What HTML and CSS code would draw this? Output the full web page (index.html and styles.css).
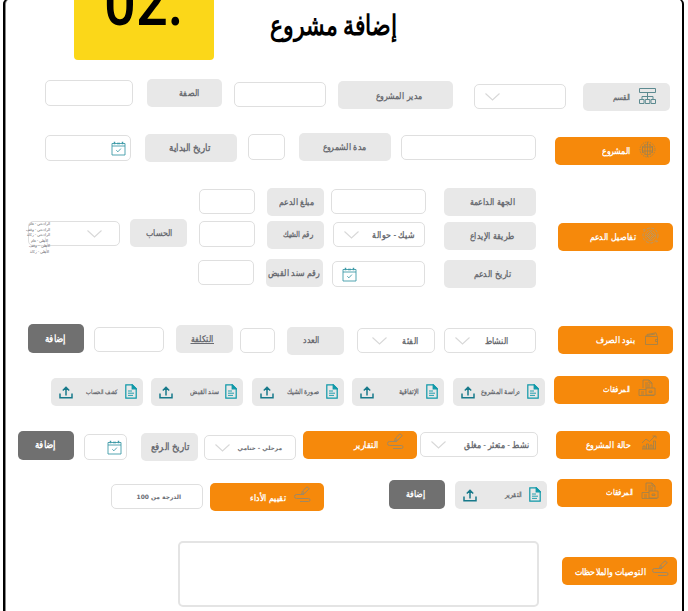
FILE: index.html
```html
<!DOCTYPE html>
<html lang="ar">
<head>
<meta charset="utf-8">
<title>إضافة مشروع</title>
<link rel="stylesheet" href="styles.css">
</head>
<body>
<svg class="defs" width="0" height="0">
  <symbol id="chev" viewBox="0 0 15 8"><path d="M.5.5 7.5 7 14.500.5"/></symbol>
  <symbol id="cal" viewBox="0 0 15 15"><path d="M1 2.500h13v11.500H1zM1 5h13"/><path d="M3.500.8v2.400M6 2.500h3M11.500.8v2.400" stroke-width="1.500"/><path d="m5.300 9.300 1.600 1.500 3-3.200"/></symbol>
  <symbol id="doc" viewBox="0 0 12 15"><path d="M.8.8h6.400l4 4v9.400H.8z"/><path d="M7.200.8v4h4z" fill="#0e98a8"/><path d="M3 7h4M3 9.200h6M3 11.400h5" stroke-width=".9"/></symbol>
  <symbol id="up" viewBox="0 0 14 13"><path d="M1 7.500v4.300h12V7.500M7 9.500V1.500M3.800 4.500 7 1.300l3.200 3.200"/></symbol>
  <symbol id="org" viewBox="0 0 17 18"><path d="M.5 1.500h16v4H.5zM8.500 5.500v7M3 12.500V9.500h11v3M.5 12.500h4.500v4H.5zM6.300 12.500h4.500v4H6.300zM12 12.500h4.500v4H12z"/></symbol>
  <symbol id="globe" viewBox="0 0 17 17"><circle cx="8.500" cy="8.500" r="7.500" stroke-dasharray="1.500 1"/><circle cx="8.500" cy="8.500" r="5.200" stroke-dasharray="2 .8"/><path d="M8.500 1v15M6 3v11M11 3v11M3.500 5v7M13.500 5v7M4 6h9M4 10h9"/></symbol>
  <symbol id="target" viewBox="0 0 17 17"><circle cx="8.500" cy="8.500" r="7.500" stroke-dasharray="3 1.500"/><circle cx="8.500" cy="8.500" r="5" stroke-dasharray="1.500 .6"/><path d="m8.500 4.500 4 4-4 4-4-4zM8.500 6.500l2 2-2 2-2-2zM1 3l2-1M14 15l2-1"/></symbol>
  <symbol id="wallet" viewBox="0 0 15 14"><path d="M1.500 4.500h12v8h-12zM1.500 4.500l1.500-2L12 .8l1 3M3 3.500l8-1.500M13.500 7.500h-2v2h2"/></symbol>
  <symbol id="files" viewBox="0 0 18 18"><path d="M5 9V1h6l3 3v5M11 1v3h3M7 4h3M7 6h5M7 8h5M8 9h9v7H8zM1 10.500h7M1 10.500v6h15M3 13h3M3 15h3M11 12h3v1.500h-3z"/></symbol>
  <symbol id="chart" viewBox="0 0 16 15"><path d="M1 14h14M2 14v-3h2v3M5.500 14V9h2v5M9 14v-4h2v4M12.500 14V6h2v8M1 8l4-4 3.500 2.500L14 1M11.500 1H15v2.500"/></symbol>
  <symbol id="pen" viewBox="0 0 17 17"><path d="m7.500 8 1-3L13 .8l2.300 1.800L10.500 7.500zM8.500 5l2 2.300M7 8.500H2.500a2 2 0 0 0 0 4h12a1.500 1.500 0 0 1 0 3H6M5 8.500h5"/></symbol>
</svg>
<main class="page">
  <header class="head">
    <div class="badge"><span>02.</span></div>
    <h1>إضافة مشروع</h1>
  </header>

  <section class="row r1">
    <div class="input"></div>
    <div class="label"><span>الصفة</span></div>
    <div class="input"></div>
    <div class="label"><span>مدير المشروع</span></div>
    <div class="input"><svg class="chev"><use href="#chev"/></svg></div>
    <div class="label"><svg class="org"><use href="#org"/></svg><span>القسم</span></div>
  </section>

  <section class="row r2">
    <div class="input"><svg class="cal"><use href="#cal"/></svg></div>
    <div class="label"><span>تاريخ البداية</span></div>
    <div class="input"></div>
    <div class="label"><span>مدة الشمروع</span></div>
    <div class="input"></div>
    <div class="title"><svg><use href="#globe"/></svg><span>المشروع</span></div>
  </section>

  <section class="row r3a">
    <div class="input"></div>
    <div class="label"><span>مبلغ الدعم</span></div>
    <div class="input"></div>
    <div class="label"><span>الجهة الداعمة</span></div>
  </section>
  <section class="row r3b">
    <div class="input account">
      <svg class="chev"><use href="#chev"/></svg>
      <ul class="options"><li>الراجحي - عام</li><li>الراجحي - وقف</li><li>الراجحي - زكاة</li><li>الأهلي - عام</li><li>الأهلي - وقف</li><li>الأهلي - زكاة</li></ul>
    </div>
    <div class="label"><span>الحساب</span></div>
    <div class="input"></div>
    <div class="label"><span>رقم الشيك</span></div>
    <div class="input"><span>شيك - حوالة</span><svg class="chev"><use href="#chev"/></svg></div>
    <div class="label"><span>طريقة الإيداع</span></div>
    <div class="title"><svg class="target"><use href="#target"/></svg><span>تفاصيل الدعم</span></div>
  </section>
  <section class="row r3c">
    <div class="input"></div>
    <div class="label"><span>رقم سند القبض</span></div>
    <div class="input"><svg class="cal"><use href="#cal"/></svg></div>
    <div class="label"><span>تاريخ الدعم</span></div>
  </section>

  <section class="row r4">
    <div class="add"><span>إضافة</span></div>
    <div class="input"></div>
    <div class="label"><span class="marked">التكلفة</span></div>
    <div class="input"></div>
    <div class="label"><span>العدد</span></div>
    <div class="input"><span>الفئة</span><svg class="chev"><use href="#chev"/></svg></div>
    <div class="input"><span>النشاط</span><svg class="chev"><use href="#chev"/></svg></div>
    <div class="title"><svg class="wallet"><use href="#wallet"/></svg><span>بنود الصرف</span></div>
  </section>

  <section class="row r5">
    <div class="label"><svg class="doc"><use href="#doc"/></svg><span>كشف الحساب</span><svg class="up"><use href="#up"/></svg></div>
    <div class="label"><svg class="doc"><use href="#doc"/></svg><span>سند القبض</span><svg class="up"><use href="#up"/></svg></div>
    <div class="label"><svg class="doc"><use href="#doc"/></svg><span>صورة الشيك</span><svg class="up"><use href="#up"/></svg></div>
    <div class="label"><svg class="doc"><use href="#doc"/></svg><span>الإتفاقية</span><svg class="up"><use href="#up"/></svg></div>
    <div class="label"><svg class="doc"><use href="#doc"/></svg><span>دراسة المشروع</span><svg class="up"><use href="#up"/></svg></div>
    <div class="title"><svg class="files"><use href="#files"/></svg><span>المرفقات</span></div>
  </section>

  <section class="row r6">
    <div class="add"><span>إضافة</span></div>
    <div class="input"><svg class="cal"><use href="#cal"/></svg></div>
    <div class="label"><span>تاريخ الرفع</span></div>
    <div class="input"><span class="sans">مرحلي - ختامي</span><svg class="chev"><use href="#chev"/></svg></div>
    <div class="title"><svg class="pen"><use href="#pen"/></svg><span>التقارير</span></div>
    <div class="input"><span>نشط - متعثر - مغلق</span><svg class="chev"><use href="#chev"/></svg></div>
    <div class="title"><svg class="chart"><use href="#chart"/></svg><span>حالة المشروع</span></div>
  </section>

  <section class="row r7">
    <div class="input"><span class="sans">الدرجة من 100</span></div>
    <div class="title"><svg class="pen"><use href="#pen"/></svg><span>تقييم الأداء</span></div>
    <div class="add"><span>إضافة</span></div>
    <div class="label"><svg class="doc"><use href="#doc"/></svg><span>التقرير</span><svg class="up"><use href="#up"/></svg></div>
    <div class="title"><svg class="files"><use href="#files"/></svg><span>المرفقات</span></div>
  </section>

  <section class="row r8">
    <div class="input notes"></div>
    <div class="title"><svg class="pen"><use href="#pen"/></svg><span>التوصيات والملاحظات</span></div>
  </section>
</main>
</body>
</html>
```
FILE: styles.css
```css
* { box-sizing: border-box; }
body { margin: 0; height: 611px; overflow: hidden; background: #fff; color: #6a6c72; }
.defs { display: block; }

.page {
  width: 681px; height: 630px; margin: -1px 0 0 3px;
  border-radius: 5px;
  box-shadow: inset 2px 0 #000, inset -2px 0 #000, inset 3px 0 #888;
}
.head { display: flex; height: 80px; }
.badge {
  width: 140px; height: 61px; margin-left: 71px;
  display: flex; align-items: flex-end; justify-content: center;
  background: #fbd719; border-radius: 0 0 4px 4px;
}
.badge span {
  font: 500 66px/66px Roboto, sans-serif; color: #000;
  margin-bottom: 24.5px; transform: scaleX(.85);
}
h1 {
  margin: 7px 0 0 55px; width: 128px; direction: rtl; white-space: nowrap;
  font: bold 28px/40px "Liberation Serif", serif; color: #000;
  transform: scaleX(.785); transform-origin: right;
}

/* --l gap before, --w width, --t top offset, --r inner right edge, --f text size */
.row { display: flex; align-items: flex-start; }
.row > div {
  flex: none; display: flex; align-items: center; direction: rtl;
  margin-left: var(--l, 0); margin-top: var(--t, 0);
  width: var(--w); padding-right: var(--r, 0);
  border-radius: 5px; height: 28px;
}
.row > .label { background: #e8e8e8; }
.row > .input { height: 26px; border: 1px solid #dfdfdf; background: #fff; }
.row > .title { background: #f6890b; color: #fff; }
.row > .add { background: #707070; color: #fff; height: 29px; }
.row span {
  flex: none; white-space: nowrap;
  font: bold calc(var(--f, 8px) * 1.15)/14px "Liberation Serif", serif;
  transform: translateY(var(--y, 0)) scaleX(.87); transform-origin: right;
  margin-left: calc(var(--f, 8px) * -1);
}
.row span.sans { font-family: "DejaVu Sans", sans-serif; font-size: var(--f); transform: none; }
.row span.marked { text-decoration: underline; text-decoration-thickness: 1px; }

svg { flex: none; fill: none; stroke: #9c8250; stroke-width: .8; }
.title svg { width: 17px; height: 17px; margin-left: var(--g, 8px); transform: translateY(-2px); }
.title .target { stroke: #a59a80; }
.title .pen { stroke: #a08862; stroke-width: 1; transform: translateY(-3px); }
.title .wallet { width: 15px; height: 14px; transform: translateY(-1px); }
.title .files { width: 18px; height: 18px; }
.title .chart { width: 16px; height: 15px; }
.org { width: 17px; height: 18px; margin-left: 9px; stroke: #5c8a90; stroke-width: 1; transform: translateY(-1px); }
.chev { width: 15px; height: 8px; margin-right: auto; margin-left: var(--c, 10px); stroke: #d8d8d8; stroke-width: 1.1; }
.cal { width: 15px; height: 15px; stroke: #3f9ba8; stroke-width: .9; }
.doc { width: 12px; height: 15px; margin-left: var(--g, 7px); stroke: #0e98a8; stroke-width: 1.2; transform: translateY(-1px); }
.up { width: 14px; height: 13px; margin-right: auto; margin-left: 8px; stroke: #17798a; stroke-width: 1.5; }

.r1 { height: 54px; }
.r1 > :nth-child(1) { --l: 42px; --w: 88px; --t: 1px; }
.r1 > :nth-child(2) { --l: 14px; --w: 75px; --r: 22px; }
.r1 > :nth-child(3) { --l: 12px; --w: 92px; --t: 3px; height: 25px; }
.r1 > :nth-child(4) { --l: 12px; --w: 115px; --t: 2px; --r: 31px; --f: 8.08px; --y: 1px; }
.r1 > :nth-child(5) { --l: 21px; --w: 92px; --t: 5px; height: 25px; }
.r1 > :nth-child(6) { --l: 17px; --w: 87px; --t: 4px; --r: 14px; --f: 7px; --y: 1px; }

.r2 { height: 55px; }
.r2 > :nth-child(1) { --l: 42px; --w: 86px; --t: 2px; --r: 4px; }
.r2 > :nth-child(2) { --l: 14px; --w: 92px; --t: 1px; --r: 27px; --f: 8.65px; }
.r2 > :nth-child(3) { --l: 11px; --w: 37px; --t: 1px; }
.r2 > :nth-child(4) { --l: 14px; --w: 92px; --r: 25px; }
.r2 > :nth-child(5) { --l: 10px; --w: 135px; --t: 2px; height: 25px; }
.r2 > :nth-child(6) { --l: 19px; --w: 115px; --t: 4px; --r: 14px; --f: 7.9px; }

.r3a { height: 31px; }
.r3a > :nth-child(1) { --l: 196px; --w: 56px; --t: 1px; height: 25px; }
.r3a > :nth-child(2) { --l: 12px; --w: 57px; --r: 10px; --f: 7.75px; }
.r3a > :nth-child(3) { --l: 7px; --w: 95px; --t: 1px; height: 25px; }
.r3a > :nth-child(4) { --l: 18px; --w: 92px; --r: 21px; }

.r3b { height: 40px; }
.r3b > :nth-child(1) { --l: 25px; --w: 92px; --t: 2px; --c: 58px; height: 25px; }
.r3b > :nth-child(2) { --l: 10px; --w: 57px; --r: 14px; --f: 7.45px; }
.r3b > :nth-child(3) { --l: 12px; --w: 56px; --t: 2px; }
.r3b > :nth-child(4) { --l: 12px; --w: 57px; --t: 1.500px; --r: 11px; --f: 7.3px; }
.r3b > :nth-child(5) { --l: 9px; --w: 92px; --t: 3px; --r: 9px; --f: 8.1px; height: 25px; }
.r3b > :nth-child(6) { --l: 19px; --w: 92px; --t: 3px; --r: 22px; --f: 7.9px; }
.r3b > :nth-child(7) { --l: 22px; --w: 115px; --t: 4px; --r: 14px; --g: 6px; --f: 7.75px; }
.account { position: relative; }
.options {
  position: absolute; left: 0; top: -1px; width: 21px; margin: 0; padding: 0; list-style: none;
  font: 4px/5.6px "Liberation Serif", serif; text-align: center; white-space: nowrap;
}

.r3c { height: 65px; }
.r3c > :nth-child(1) { --l: 195px; --w: 56px; --t: 1px; height: 25px; }
.r3c > :nth-child(2) { --l: 12px; --w: 57px; --r: 4px; --f: 7.65px; }
.r3c > :nth-child(3) { --l: 9px; --w: 93px; --t: 2px; --r: 67px; }
.r3c > :nth-child(4) { --l: 19px; --w: 92px; --t: 1px; --r: 25px; --f: 8.1px; }

.r4 { height: 52px; }
.r4 > :nth-child(1) { --l: 25px; --w: 56px; --r: 18px; --f: 8.3px; }
.r4 > :nth-child(2) { --l: 10px; --w: 70px; --t: 3px; height: 25px; }
.r4 > :nth-child(3) { --l: 12px; --w: 57px; --t: 1px; --r: 19px; --f: 7.7px; }
.r4 > :nth-child(4) { --l: 7px; --w: 35px; --t: 4px; height: 25px; }
.r4 > :nth-child(5) { --l: 12px; --w: 57px; --t: 3px; --r: 24px; --f: 7.4px; --y: -1px; }
.r4 > :nth-child(6) { --l: 13px; --w: 78px; --t: 4px; --r: 15px; --c: 14px; --f: 8px; height: 25px; }
.r4 > :nth-child(7) { --l: 9px; --w: 92px; --t: 4px; --r: 26px; --f: 7.4px; height: 25px; }
.r4 > :nth-child(8) { --l: 22px; --w: 115px; --t: 2px; --r: 14px; --g: 9px; --f: 8.25px; }

.r5 { height: 54px; }
.r5 > .label { --l: 8px; --w: 92px; --t: 2px; --r: 6px; --f: 6px; }
.r5 > :nth-child(1) { --l: 48px; --f: 5.6px; }
.r5 > :nth-child(2) { --g: 6px; }
.r5 > :nth-child(3) { --l: 9px; }
.r5 > :nth-child(5) { --l: 9px; }
.r5 > :nth-child(6) { --l: 9px; --w: 115px; --r: 13px; --f: 7.3px; }

.r6 { height: 49px; }
.r6 > :nth-child(1) { --l: 15px; --w: 56px; --t: 1px; --r: 18px; --f: 8.3px; --y: -1px; }
.r6 > :nth-child(2) { --l: 10px; --w: 43px; --t: 4px; --r: 4px; }
.r6 > :nth-child(3) { --l: 14px; --w: 57px; --t: 2.500px; --r: 9px; --f: 8.45px; }
.r6 > :nth-child(4) { --l: 6px; --w: 92px; --t: 5px; --r: 13px; --f: 5.83px; height: 25px; }
.r6 > :nth-child(5) { --l: 7px; --w: 114px; --t: .5px; --r: 13px; --f: 8px; }
.r6 > :nth-child(6) { --l: 3px; --w: 118px; --t: 2px; --r: 8px; --f: 8.05px; height: 25px; }
.r6 > :nth-child(7) { --l: 18px; --w: 114px; --t: .5px; --r: 13px; --g: 10px; }

.r7 { height: 62px; }
.r7 > :nth-child(1) { --l: 108px; --w: 92px; --t: 5px; --r: 21px; --f: 5.93px; height: 25px; }
.r7 > :nth-child(2) { --l: 7px; --w: 114px; --t: 4px; --r: 13px; --f: 7.8px; --y: 1px; }
.r7 > :nth-child(3) { --l: 65px; --w: 56px; --t: 1px; --r: 19px; --f: 7.75px; --y: -1px; }
.r7 > :nth-child(4) { --l: 10px; --w: 92px; --t: 2px; --r: 6px; --f: 5.8px; }
.r7 > :nth-child(5) { --l: 10px; --w: 115px; --r: 13px; --f: 7.3px; }

.r8 > :nth-child(1) { --l: 175px; --w: 361px; }
.row > .notes { height: 66px; border-width: 2px; border-color: #e4e4e4; }
.r8 > :nth-child(2) { --l: 23px; --w: 115px; --t: 16px; --r: 8px; --g: 6px; --f: 7.87px; --y: 1px; }
```
